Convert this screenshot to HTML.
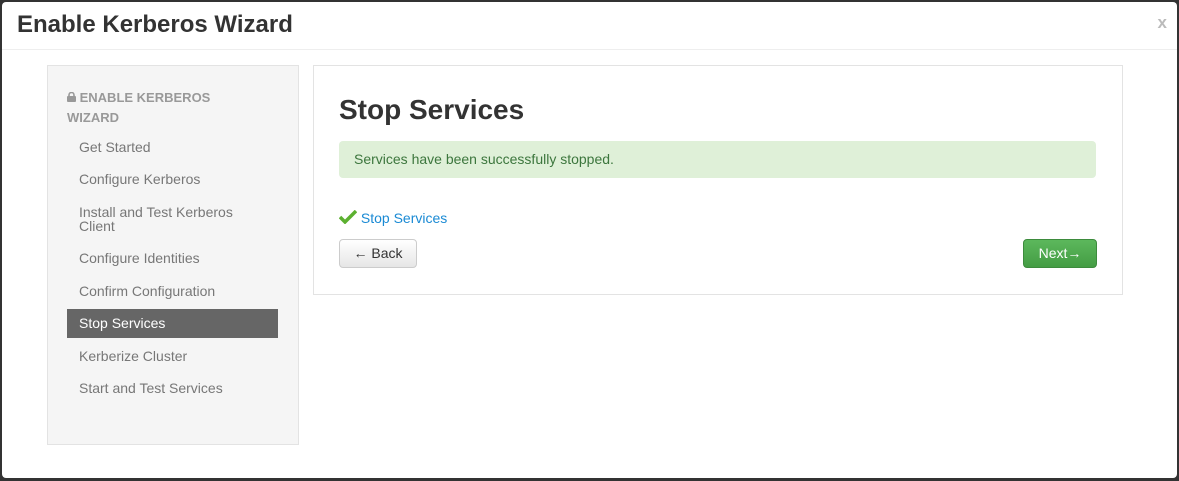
<!DOCTYPE html>
<html><head><style>
body{margin:0;width:1179px;height:481px;background:#333;font-family:"Liberation Sans",sans-serif;overflow:hidden;position:relative}
.modal{position:absolute;left:2px;top:2px;width:1175px;height:476px;background:#fff;border-radius:4px}
.hdr{position:absolute;left:0;top:0;width:100%;height:47px;border-bottom:1px solid #eee}
.hdr h1{position:absolute;left:15px;top:9px;margin:0;font-size:24px;font-weight:bold;color:#333}
.x{position:absolute;right:10px;top:11px;color:#bbb;font-size:17px;font-weight:bold}
.side{position:absolute;left:45px;top:63px;width:250px;height:378px;background:#f5f5f5;border:1px solid #e3e3e3}
.sh{position:absolute;left:19px;top:22px;font-size:13px;font-weight:bold;color:#999;line-height:20px}
.it{position:absolute;left:31px;font-size:14px;color:#777;line-height:14px}
.act{position:absolute;left:19px;top:243px;width:211px;height:29px;background:#666}
.main{position:absolute;left:311px;top:63px;width:808px;height:228px;border:1px solid #e3e3e3}
.main h2{position:absolute;left:25px;top:28px;margin:0;font-size:28px;font-weight:bold;color:#333}
.alert{position:absolute;left:25px;top:75px;width:757px;height:37px;background:#dff0d8;border-radius:4px;color:#3c763d;font-size:14px;line-height:37px;text-indent:15px}
.lnk{position:absolute;left:25px;top:144px;font-size:14px;color:#1a8ad4}
.btn{position:absolute;top:173px;height:29px;border-radius:4px;font-size:14px;line-height:27px;text-align:center;box-sizing:border-box}
.back{left:25px;width:78px;border:1px solid #ccc;background:linear-gradient(#fff,#e6e6e6);color:#333}
.next{left:709px;width:74px;background:linear-gradient(#5cb85c,#449d44);color:#fff;border:1px solid #3d8b3d}
</style></head><body>
<div class="modal">
<div class="hdr"><h1>Enable Kerberos Wizard</h1><div class="x">x</div></div>
<div class="side">
<div class="sh"><svg width="9" height="10" viewBox="0 0 9 10" style="vertical-align:0"><rect x="0" y="4" width="9" height="6" rx="1" fill="#999"/><path d="M2 4.5V3a2.5 2.5 0 0 1 5 0v1.5" stroke="#999" stroke-width="1.6" fill="none"/></svg> ENABLE KERBEROS<br>WIZARD</div>
<div class="it" style="top:74px">Get Started</div>
<div class="it" style="top:106px">Configure Kerberos</div>
<div class="it" style="top:139px">Install and Test Kerberos<br>Client</div>
<div class="it" style="top:185px">Configure Identities</div>
<div class="it" style="top:218px">Confirm Configuration</div>
<div class="act"></div>
<div class="it" style="top:250px;color:#fff">Stop Services</div>
<div class="it" style="top:283px">Kerberize Cluster</div>
<div class="it" style="top:315px">Start and Test Services</div>
</div>
<div class="main">
<h2>Stop Services</h2>
<div class="alert">Services have been successfully stopped.</div>
<div class="lnk"><svg width="18" height="14" viewBox="0 0 18 14" style="vertical-align:-1px"><path d="M1 7l5 5L17 1" stroke="#5cb030" stroke-width="3.5" fill="none"/></svg> Stop Services</div>
<div class="btn back">&larr; Back</div>
<div class="btn next">Next&rarr;</div>
</div>
</div>
</body></html>
